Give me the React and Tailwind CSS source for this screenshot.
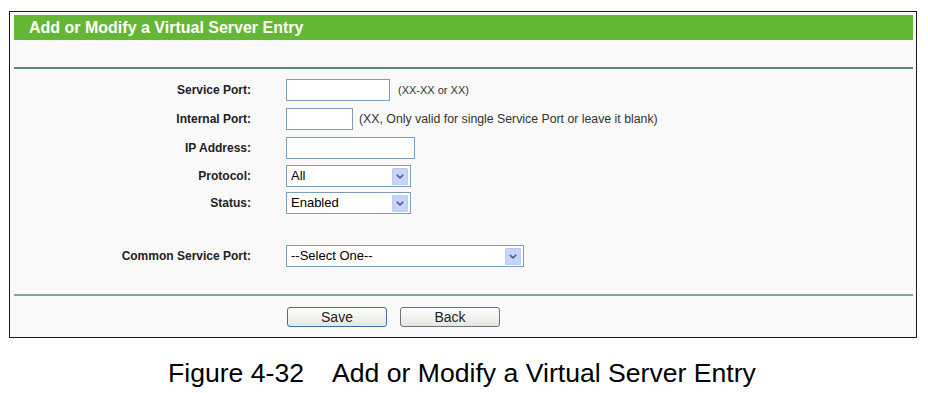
const font = { fontFamily: '"Liberation Sans", Arial, sans-serif' }

function Arrow() {
  return (
    <div className="w-[16px] h-[17px] mr-[2px] bg-[#c5d5fa] border border-[#b8cbf3] rounded-[1px] flex items-center justify-center">
      <svg width="8" height="5" viewBox="0 0 8 5">
        <path d="M0.8 0.8 L4 3.8 L7.2 0.8" fill="none" stroke="#4d6185" strokeWidth="1.6" />
      </svg>
    </div>
  )
}

function Select({ value, width }) {
  return (
    <div className={`${width} h-[22px] bg-white border border-[#7f9db9] flex items-center justify-between`}>
      <span className="pl-[4px] text-[13px] text-black">{value}</span>
      <Arrow />
    </div>
  )
}

function Row({ label, children, className = "" }) {
  return (
    <div className={`flex items-center h-[22px] ${className}`}>
      <div className="w-[237px] text-right text-[12px] font-bold text-[#222]">{label}</div>
      <div className="ml-[35px] flex items-center">{children}</div>
    </div>
  )
}

export default function App() {
  return (
    <div className="w-[928px] h-[393px] bg-white overflow-hidden" style={font}>

      {/* FRAME */}
      <div className="ml-[9px] mt-[11px] w-[908px] h-[327px] border border-[#1a1a1a] bg-[#f9f9f9] pt-[3px] pl-[4px] pr-[3px]">

        <div className="h-[25px] bg-[#64b735] flex items-center pl-[15px] text-white font-bold text-[16px]">
          Add or Modify a Virtual Server Entry
        </div>
        <div className="h-[27px]" />
        <div className="h-[2px] bg-[#5b8578]" />

        {/* FORM */}
        <div className="mt-[10px] flex flex-col">
          <Row label="Service Port:" className="mb-[7px]">
            <div className="w-[104px] h-[22px] bg-white border border-[#7f9db9]" />
            <span className="ml-[8px] text-[11px] text-[#333]">(XX-XX or XX)</span>
          </Row>
          <Row label="Internal Port:" className="mb-[7px]">
            <div className="w-[67px] h-[22px] bg-white border border-[#7f9db9]" />
            <span className="ml-[6px] text-[12.3px] text-[#333]">(XX, Only valid for single Service Port or leave it blank)</span>
          </Row>
          <Row label="IP Address:" className="mb-[6px]">
            <div className="w-[129px] h-[22px] bg-white border border-[#7f9db9]" />
          </Row>
          <Row label="Protocol:" className="mb-[5px]">
            <Select value="All" width="w-[125px]" />
          </Row>
          <Row label="Status:" className="mb-[31px]">
            <Select value="Enabled" width="w-[125px]" />
          </Row>
          <Row label="Common Service Port:">
            <Select value="--Select One--" width="w-[238px]" />
          </Row>
        </div>

        <div className="mt-[27px] h-[2px] bg-[#80a898]" />

        {/* BUTTONS */}
        <div className="mt-[11px] flex pl-[273px] gap-[13px]">
          <button className="w-[100px] h-[20px] rounded-[3px] border border-[#3d6fa8] bg-gradient-to-b from-white to-[#e6e6e0] text-[14px] leading-none text-[#222]">
            Save
          </button>
          <button className="w-[100px] h-[20px] rounded-[3px] border border-[#6b7480] bg-gradient-to-b from-white to-[#e6e6e0] text-[14px] leading-none text-[#222]">
            Back
          </button>
        </div>
      </div>

      {/* CAPTION */}
      <div className="mt-[20px] pl-[168px] text-[26.6px] leading-[30px] text-black whitespace-pre">
        {"Figure 4-32    Add or Modify a Virtual Server Entry"}
      </div>

    </div>
  )
}
